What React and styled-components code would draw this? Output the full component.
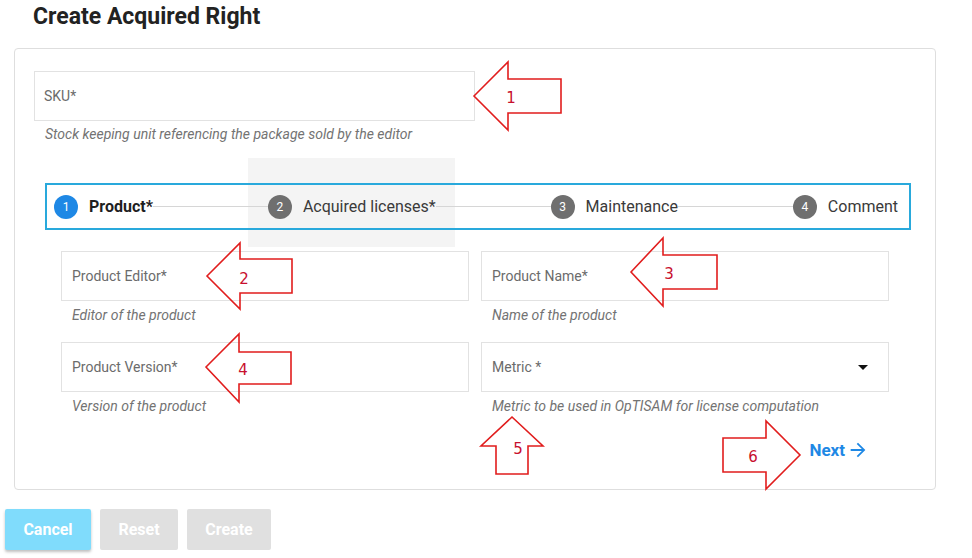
import React from 'react';
import styled, { createGlobalStyle } from 'styled-components';

const GlobalStyle = createGlobalStyle`
  html, body {
    margin: 0;
    padding: 0;
    background: #fff;
    font-family: Roboto, "Liberation Sans", Arial, sans-serif;
  }
`;

const Page = styled.div`
  position: relative;
  width: 972px;
  height: 558px;
  overflow: hidden;
`;

const Title = styled.h1`
  margin: 0 0 18px 33px;
  padding-top: 4px;
  font-size: 23px;
  line-height: 26px;
  font-weight: 700;
  color: #222;
`;

const Card = styled.div`
  position: relative;
  margin-left: 14px;
  width: 922px;
  box-sizing: border-box;
  border: 1px solid #dedede;
  border-radius: 4px;
  padding: 22px 20px 27px 19px;
`;

const Ripple = styled.div`
  position: absolute;
  left: 233px;
  top: 109px;
  width: 207px;
  height: 89px;
  background: #f4f4f4;
  z-index: 0;
`;

const FieldBox = styled.div`
  position: relative;
  height: 50px;
  width: ${({ $width }) => $width || 'auto'};
  box-sizing: border-box;
  border: 1px solid #e2e2e2;
  background: #fff;
  display: flex;
  align-items: center;
  justify-content: space-between;
  padding: 0 20px 0 ${({ $pad }) => $pad || 10}px;
  font-size: 14px;
  color: #6b6b6b;
`;

const Caret = styled.span`
  width: 0;
  height: 0;
  border-left: 5px solid transparent;
  border-right: 5px solid transparent;
  border-top: 5px solid #111;
`;

const Hint = styled.div`
  margin-top: ${({ $gap }) => $gap || 6}px;
  padding-left: ${({ $indent }) => $indent || 11}px;
  font-size: 14px;
  line-height: 16px;
  font-style: italic;
  color: #737373;
`;

const Stepper = styled.div`
  position: relative;
  z-index: 1;
  margin: 41px 0 0 11px;
  width: 866px;
  height: 47px;
  box-sizing: border-box;
  border: 2px solid #29a9dc;
  display: flex;
  align-items: center;
  padding: 0 11px 0 7px;
`;

const Step = styled.div`
  display: flex;
  align-items: center;
  gap: 11px;
  font-size: 16px;
  color: ${({ $active }) => ($active ? '#1f1f1f' : '#3a3a3a')};
  font-weight: ${({ $active }) => ($active ? 700 : 400)};
  white-space: nowrap;
`;

const StepDot = styled.span`
  width: 24px;
  height: 24px;
  border-radius: 50%;
  background: ${({ $active }) => ($active ? '#1e88e5' : '#6f6f6f')};
  color: #fff;
  font-size: 12px;
  font-weight: 400;
  display: flex;
  align-items: center;
  justify-content: center;
`;

const Connector = styled.div`
  flex: 1;
  height: 1px;
  margin-top: -1px;
  background: #d6d6d6;
`;

const Grid = styled.div`
  position: relative;
  z-index: 1;
  margin: 21px 23px 0 27px;
  display: grid;
  grid-template-columns: 408px 408px;
  column-gap: 12px;
  row-gap: 19px;
`;

const Footer = styled.div`
  display: flex;
  justify-content: flex-end;
  margin: 24px 46px 0 0;
`;

const NextLink = styled.a`
  display: flex;
  align-items: center;
  gap: 2px;
  color: #1e88e5;
  font-size: 17px;
  font-weight: 700;
  line-height: 24px;
  text-decoration: none;
`;

const Actions = styled.div`
  display: flex;
  gap: 9px;
  margin-top: 19px;
  padding-left: 5px;
`;

const Button = styled.button`
  height: 41px;
  width: ${({ $w }) => $w}px;
  border: none;
  border-radius: 2px;
  background: ${({ $primary }) => ($primary ? '#80dcfc' : '#e0e0e0')};
  box-shadow: ${({ $primary }) => ($primary ? '0 2px 3px rgba(0,0,0,0.25)' : 'none')};
  color: #fff;
  font-family: Roboto, "Liberation Sans", Arial, sans-serif;
  font-size: 16px;
  font-weight: 700;
  padding: 0;
`;

const Overlay = styled.svg`
  position: absolute;
  left: 0;
  top: 0;
  pointer-events: none;
  z-index: 5;
`;

const arrows = [
  { pts: '474,96 508,62 508,79 561,79 561,113 508,113 508,130', n: '1', x: 511, y: 98 },
  { pts: '207,276 240,243 240,259 292,259 292,293 240,293 240,309', n: '2', x: 244, y: 279 },
  { pts: '631,272 663,238 663,255 717,255 717,289 663,289 663,306', n: '3', x: 669, y: 274 },
  { pts: '206,367 239,334 239,352 291,352 291,384 239,384 239,402', n: '4', x: 243, y: 370 },
  { pts: '512,417 543,446 528,446 528,474 496,474 496,446 481,446', n: '5', x: 518, y: 449 },
  { pts: '800,455 766,489 766,472 723,472 723,438 766,438 766,421', n: '6', x: 753, y: 457 },
];

const Annotations = () => (
  <Overlay width="972" height="558" viewBox="0 0 972 558">
    {arrows.map((a) => (
      <g key={a.n}>
        <polygon points={a.pts} fill="none" stroke="#e11d1d" strokeWidth="1.6" strokeLinejoin="miter" />
        <text
          x={a.x}
          y={a.y}
          fill="#c8102e"
          fontSize="15"
          fontFamily="'DejaVu Sans', 'Liberation Sans', sans-serif"
          textAnchor="middle"
          dominantBaseline="central"
        >
          {a.n}
        </text>
      </g>
    ))}
  </Overlay>
);

const steps = [
  { n: 1, label: 'Product*', active: true },
  { n: 2, label: 'Acquired licenses*' },
  { n: 3, label: 'Maintenance' },
  { n: 4, label: 'Comment' },
];

const fields = [
  { label: 'Product Editor*', hint: 'Editor of the product' },
  { label: 'Product Name*', hint: 'Name of the product' },
  { label: 'Product Version*', hint: 'Version of the product' },
  { label: 'Metric *', hint: 'Metric to be used in OpTISAM for license computation', select: true },
];

const App = () => (
  <Page>
    <GlobalStyle />
    <Title>Create Acquired Right</Title>
    <Card>
      <Ripple />
      <FieldBox $width="441px" $pad={9}>SKU*</FieldBox>
      <Hint $gap={5}>Stock keeping unit referencing the package sold by the editor</Hint>

      <Stepper>
        {steps.map((s, i) => (
          <React.Fragment key={s.n}>
            {i > 0 && <Connector />}
            <Step $active={s.active}>
              <StepDot $active={s.active}>{s.n}</StepDot>
              {s.label}
            </Step>
          </React.Fragment>
        ))}
      </Stepper>

      <Grid>
        {fields.map((f) => (
          <div key={f.label}>
            <FieldBox>
              {f.label}
              {f.select && <Caret />}
            </FieldBox>
            <Hint>{f.hint}</Hint>
          </div>
        ))}
      </Grid>

      <Footer>
        <NextLink href="#">
          Next
          <svg width="22" height="22" viewBox="0 0 24 24">
            <path fill="#1e88e5" d="M12 4l-1.41 1.41L16.17 11H4v2h12.17l-5.58 5.59L12 20l8-8z" />
          </svg>
        </NextLink>
      </Footer>
    </Card>

    <Actions>
      <Button $primary $w={86}>Cancel</Button>
      <Button $w={78}>Reset</Button>
      <Button $w={84}>Create</Button>
    </Actions>

    <Annotations />
  </Page>
);

export default App;
